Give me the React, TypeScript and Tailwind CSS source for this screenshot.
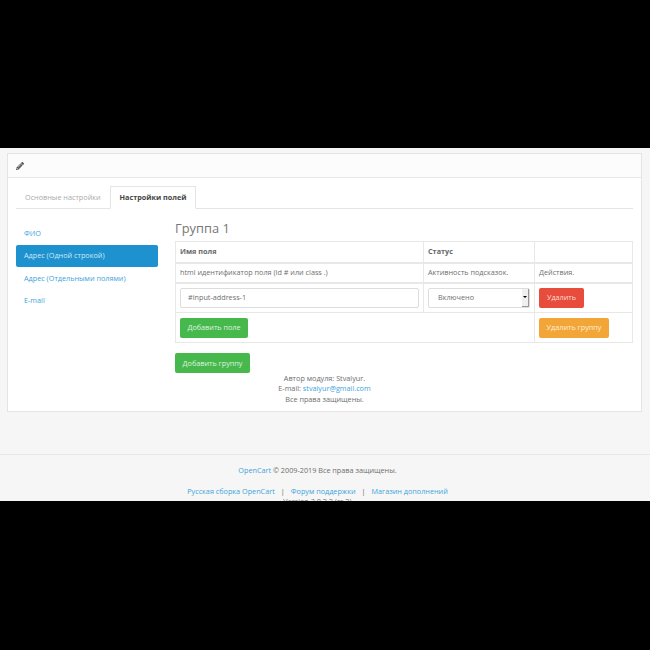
import { FaPencilAlt } from "react-icons/fa";

const sideItems = ["ФИО", "Адрес (Одной строкой)", "Адрес (Отдельными полями)", "E-mail"];

export default function App() {
  return (
    <div className="flex h-[650px] w-[650px] flex-col overflow-hidden bg-black font-['Open_Sans',sans-serif] text-[7.25px] leading-[11px] text-[#6e6e6e]">
      <div className="h-[148px] shrink-0" />
      <div className="flex h-[353px] shrink-0 flex-col overflow-hidden bg-[#f6f6f6]">
        <div className="shrink-0 pt-[5px] pr-[8px] pl-[7px]">
          <div className="h-[259px] border border-[#e4e4e4] bg-white">
            <div className="flex h-[24px] items-center border-b border-[#e8e8e8] bg-[#fcfcfc] pl-[8px]">
              <FaPencilAlt className="h-[8px] w-[8px] text-[#555]" />
            </div>
            <div className="pt-[8px] pr-[8px] pl-[8px]">
              <div className="flex h-[23px] border-b border-[#e4e4e4]">
                <div className="flex h-[23px] w-[94px] items-center pl-[9px] text-[#aaa]">Основные настройки</div>
                <div className="flex h-[23px] w-[86px] items-center justify-center border border-[#e4e4e4] border-b-white bg-white font-bold text-[#444]">
                  Настройки полей
                </div>
              </div>
              <div className="flex pt-[11px]">
                <div className="flex w-[142px] shrink-0 flex-col gap-[0.67px] pt-[2px]">
                  {sideItems.map((t, i) => (
                    <div
                      key={t}
                      className={`flex h-[22px] items-center rounded-[2px] pl-[8px] ${i === 1 ? "bg-[#1e91cf] text-[#cfe8f5]" : "text-[#3ba4dc]"}`}
                    >
                      {t}
                    </div>
                  ))}
                </div>
                <div className="ml-[17px] w-[458px] shrink-0">
                  <div className="h-[21px] text-[12.9px] leading-[17px] text-[#777]">Группа 1</div>
                  <table className="w-[457px] table-fixed border-collapse">
                    <colgroup>
                      <col className="w-[248px]" />
                      <col className="w-[111px]" />
                      <col className="w-[98px]" />
                    </colgroup>
                    <tbody>
                      <tr className="h-[21px] border-b-2 border-[#e8e8e8]">
                        <td className="border border-[#e8e8e8] px-[4px] font-bold text-[#666]">Имя поля</td>
                        <td className="border border-[#e8e8e8] px-[4px] font-bold text-[#666]">Статус</td>
                        <td className="border border-[#e8e8e8]" />
                      </tr>
                      <tr className="h-[20px]">
                        <td className="border border-b-2 border-[#e8e8e8] px-[4px]">html идентификатор поля (id # или class .)</td>
                        <td className="border border-b-2 border-[#e8e8e8] px-[4px]">Активность подсказок.</td>
                        <td className="border border-b-2 border-[#e8e8e8] px-[4px]">Действия.</td>
                      </tr>
                      <tr className="h-[30px]">
                        <td className="border border-[#e8e8e8] px-[4px]">
                          <div className="flex h-[20px] items-center rounded-[2px] border border-[#ddd] pl-[7px]">#input-address-1</div>
                        </td>
                        <td className="border border-[#e8e8e8] px-[4px]">
                          <div className="flex h-[20px] items-center justify-between rounded-[2px] border border-[#ddd] pl-[9px]">
                            <span>Включено</span>
                            <span className="flex h-full w-[7px] items-center justify-center border-r border-b border-[#999] bg-[#f0f0f0]">
                              <span className="h-0 w-0 border-x-[2px] border-t-[2px] border-x-transparent border-t-black" />
                            </span>
                          </div>
                        </td>
                        <td className="border border-[#e8e8e8] px-[4px]">
                          <div className="flex h-[20px] w-[45px] items-center justify-center rounded-[2px] bg-[#e74c3c] text-[#fbdcd8]">Удалить</div>
                        </td>
                      </tr>
                      <tr className="h-[30px]">
                        <td colSpan={2} className="border border-[#e8e8e8] px-[4px]">
                          <div className="flex h-[20px] w-[68px] items-center justify-center rounded-[2px] bg-[#47b84c] text-[#dff3e0]">Добавить поле</div>
                        </td>
                        <td className="border border-[#e8e8e8] px-[4px]">
                          <div className="flex h-[20px] w-[70px] items-center justify-center rounded-[2px] bg-[#f3a638] text-[#fdeed8]">Удалить группу</div>
                        </td>
                      </tr>
                    </tbody>
                  </table>
                  <div className="mt-[10px] flex h-[20px] w-[75px] items-center justify-center rounded-[2px] bg-[#47b84c] text-[#dff3e0]">Добавить группу</div>
                </div>
              </div>
              <div className="mt-[0px] text-center leading-[10.3px]">
                <div>Автор модуля: Stvalyur.</div>
                <div>
                  E-mail: <span className="text-[#3ba4dc]">stvalyur@gmail.com</span>
                </div>
                <div>Все права защищены.</div>
              </div>
            </div>
          </div>
        </div>
        <div className="mt-[42px] shrink-0 border-t border-[#e8e8e8] pt-[10px] pr-[15px] text-center">
          <div className="h-[21px] leading-[11px]">
            <span className="text-[#3ba4dc]">OpenCart</span> © 2009-2019 Все права защищены.
          </div>
          <div className="flex justify-center gap-[6px] text-[#3ba4dc]">
            <span>Русская сборка OpenCart</span>
            <span className="text-[#666]">|</span>
            <span>Форум поддержки</span>
            <span className="text-[#666]">|</span>
            <span>Магазин дополнений</span>
          </div>
          <div className="mt-[-1px]">Version 3.0.2.2 (rs.2)</div>
        </div>
      </div>
    </div>
  );
}
